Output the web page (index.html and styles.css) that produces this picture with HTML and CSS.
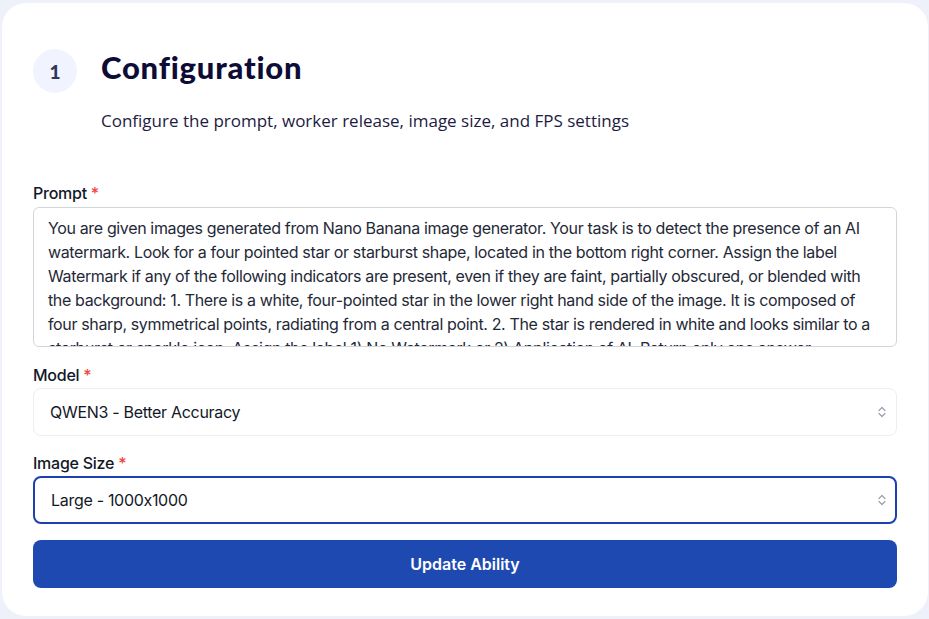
FILE: index.html
```html
<!DOCTYPE html>
<html lang="en">
<head>
<meta charset="utf-8">
<title>Configuration</title>
<link rel="stylesheet" href="styles.css">
</head>
<body>
<main class="card">
  <header class="step-header">
    <div class="step-num">1</div>
    <div class="step-text">
      <h1 class="step-title">Configuration</h1>
      <p class="step-sub">Configure the prompt, worker release, image size, and FPS settings</p>
    </div>
  </header>

  <form class="form">
    <div class="field">
      <div class="label"><span>Prompt</span><span class="req">*</span></div>
      <div class="textarea">You are given images generated from Nano Banana image generator. Your task is to detect the presence of an AI watermark. Look for a four pointed star or starburst shape, located in the bottom right corner. Assign the label Watermark if any of the following indicators are present, even if they are faint, partially obscured, or blended with the background: 1. There is a white, four-pointed star in the lower right hand side of the image. It is composed of four sharp, symmetrical points, radiating from a central point. 2. The star is rendered in white and looks similar to a starburst or sparkle icon. Assign the label 1) No Watermark or 2) Application of AI. Return only one answer.</div>
    </div>

    <div class="field field-gap">
      <div class="label"><span>Model</span><span class="req">*</span></div>
      <div class="select">
        <span>QWEN3 - Better Accuracy</span>
        <svg class="chev" width="10" height="14" viewBox="0 0 10 14" fill="none" stroke="#9ca3af" stroke-width="1.3" stroke-linecap="round" stroke-linejoin="round"><path d="M2 5.5 5 2.5 8 5.5"/><path d="M2 8.5 5 11.5 8 8.5"/></svg>
      </div>
    </div>

    <div class="field field-gap-2">
      <div class="label"><span>Image Size</span><span class="req">*</span></div>
      <div class="select select-focus">
        <span>Large - 1000x1000</span>
        <svg class="chev" width="10" height="14" viewBox="0 0 10 14" fill="none" stroke="#9ca3af" stroke-width="1.3" stroke-linecap="round" stroke-linejoin="round"><path d="M2 5.5 5 2.5 8 5.5"/><path d="M2 8.5 5 11.5 8 8.5"/></svg>
      </div>
    </div>

    <button type="button" class="btn">Update Ability</button>
  </form>
</main>
</body>
</html>
```

FILE: styles.css
```css
* { box-sizing: border-box; }
html, body { margin: 0; padding: 0; }
body {
  background: #eef0fa;
  font-family: Inter, "Liberation Sans", sans-serif;
  font-feature-settings: "calt" 0;
  height: 619px;
  overflow: hidden;
}
.card {
  margin: 3px 1px 0 2px;
  height: 613px;
  background: #ffffff;
  border-radius: 24px;
  padding: 46px 31px 0 31px;
}
.step-header {
  display: flex;
  align-items: flex-start;
  gap: 24px;
}
.step-num {
  width: 44px;
  height: 44px;
  border-radius: 50%;
  background: #f1f4fe;
  color: #34345a;
  font-family: Lato, sans-serif;
  font-weight: 900;
  font-size: 19px;
  display: flex;
  align-items: center;
  justify-content: center;
  flex-shrink: 0;
}
.step-title {
  margin: 0;
  font-family: Lato, sans-serif;
  font-weight: 900;
  font-size: 31px;
  letter-spacing: 0.8px;
  line-height: 36px;
  color: #0d0c36;
}
.step-sub {
  margin: 24px 0 0 0;
  font-family: "Open Sans", sans-serif;
  font-size: 17px;
  line-height: 24px;
  color: #1d1b3f;
}
.form {
  margin-top: 50px;
  display: flex;
  flex-direction: column;
}
.field { display: flex; flex-direction: column; }
.field-gap { margin-top: 18px; }
.field-gap-2 { margin-top: 17px; }
.label {
  display: flex;
  gap: 4px;
  font-size: 16px;
  line-height: 20px;
  font-weight: 500;
  letter-spacing: -0.25px;
  color: #111827;
  margin-bottom: 3px;
}
.field:first-child .label { margin-bottom: 4px; }
.req { color: #ef4444; letter-spacing: 0; }
.textarea {
  height: 140px;
  border: 1px solid #d1d5db;
  border-radius: 6px;
  padding: 8px 14px;
  font-size: 16px;
  line-height: 24px;
  letter-spacing: -0.36px;
  color: #1f2937;
  overflow: hidden;
}
.select {
  height: 48px;
  border: 1px solid #eceef5;
  border-radius: 8px;
  display: flex;
  align-items: center;
  justify-content: space-between;
  padding: 0 9px 0 16px;
  font-size: 16px;
  letter-spacing: -0.3px;
  color: #111827;
}
.select-focus {
  border: 2px solid #1e40af;
  padding-left: 16px;
  padding-right: 8px;
}
.chev { flex-shrink: 0; }
.btn {
  margin-top: 16px;
  height: 48px;
  border: none;
  border-radius: 8px;
  background: #1e49b1;
  color: #ffffff;
  font-family: Inter, sans-serif;
  font-size: 16px;
  font-weight: 600;
  cursor: pointer;
}
```
